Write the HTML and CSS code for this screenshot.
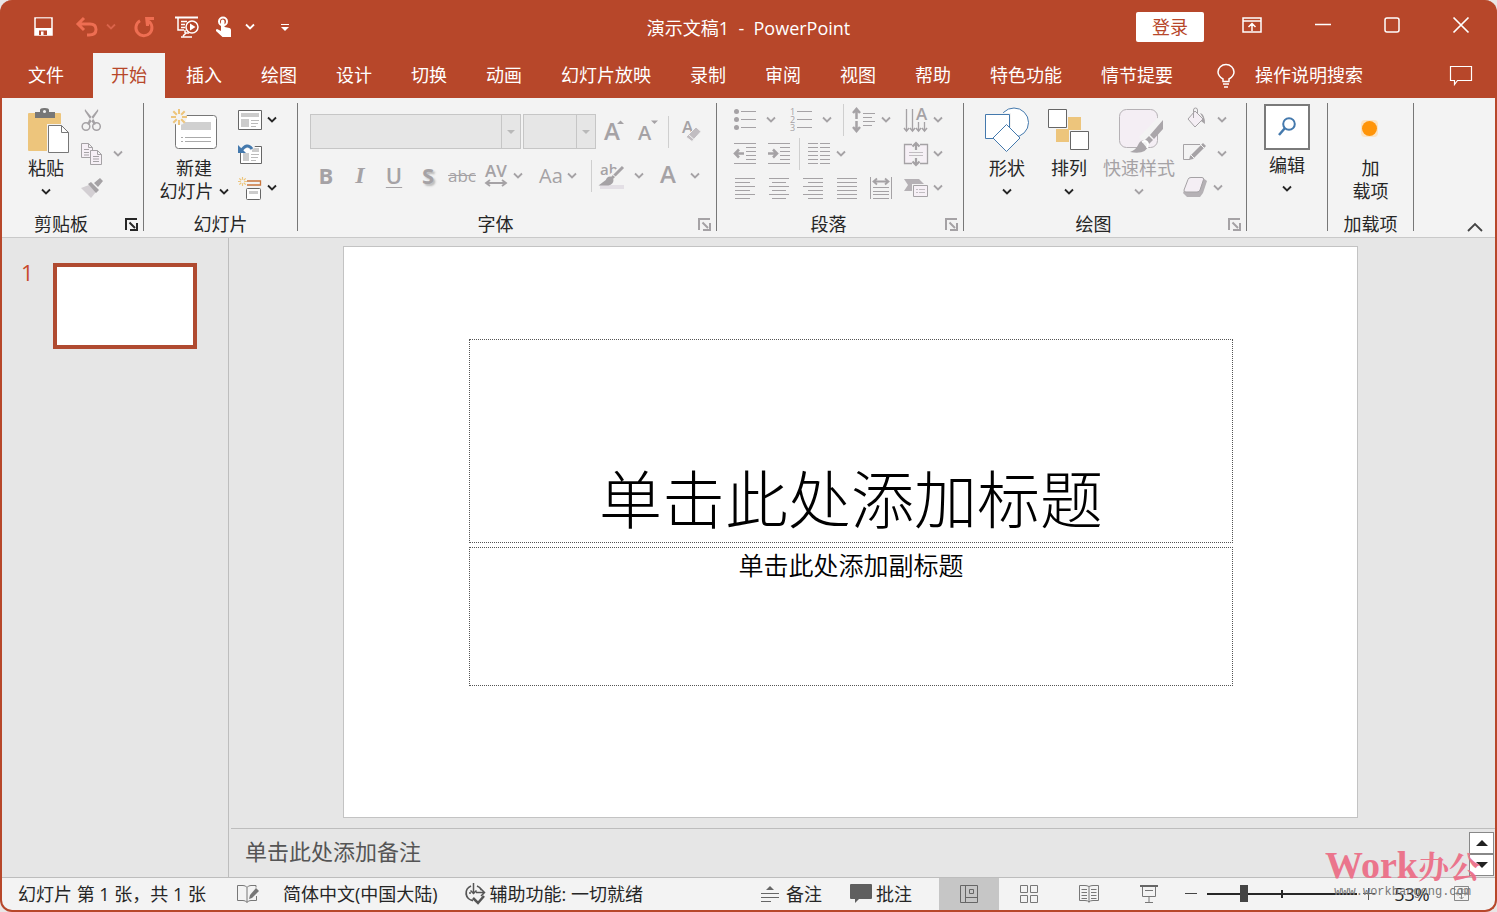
FILE: index.html
```html
<!DOCTYPE html>
<html lang="zh-CN">
<head>
<meta charset="utf-8">
<title>演示文稿1 - PowerPoint</title>
<link rel="stylesheet" href="styles.css">
</head>
<body>
<svg class="defs" aria-hidden="true">
  <symbol id="chev" viewBox="0 0 10 8"><path d="M1 1.500l4 4 4-4" fill="none" stroke="currentColor" stroke-width="1.800"/></symbol>
  <symbol id="launch" viewBox="0 0 13 13"><path d="M1 12V1h11" fill="none" stroke="currentColor" stroke-width="2"/><path d="M4.500 4.500L10 10M12 5v7H5" fill="none" stroke="currentColor" stroke-width="2"/></symbol>
  <symbol id="burst" viewBox="0 0 16 16"><path d="M8 0v5M8 11v5M0 8h5M11 8h5M2.300 2.300l3.500 3.500M10.200 10.200l3.500 3.500M13.700 2.300l-3.500 3.500M5.800 10.200l-3.500 3.500" stroke="#edc57c" stroke-width="2" fill="none"/></symbol>
</svg>
<div class="window">
  <header class="titlebar">
    <div class="quick">
      <button class="q-save" aria-label="保存"><svg width="20" height="20" viewBox="0 0 20 20"><path d="M1 1h17v17H1z" fill="none" stroke="#fff" stroke-width="1.500"/><path d="M1 11h17v7H1z" fill="#fff"/><path d="M2 1.500v8q0 1.500 1.500 1.500h12q1.500 0 1.500-1.500v-8z" fill="#b7472a"/><path d="M5 13.500h8V18H5z" fill="#b7472a"/><path d="M7 14.500h2.500V18H7z" fill="#fff"/></svg></button>
      <button class="q-undo" aria-label="撤消"><svg width="22" height="20" viewBox="0 0 22 20"><path d="M8 1L2 7l6 6M2.500 7H14q6 0 6 5.500T13 18h-2" fill="none" stroke="#ee6e52" stroke-width="3"/></svg></button>
      <button class="q-more" aria-label="撤消选项"><svg class="chev faded"><use href="#chev"/></svg></button>
      <button class="q-redo" aria-label="恢复"><svg width="20" height="20" viewBox="0 0 20 20"><path d="M14.500 4.200A8 8 0 1 1 6 3.800" fill="none" stroke="#ee6e52" stroke-width="3"/><path d="M11 0h9v3h-5v6h-3z" fill="#ee6e52"/></svg></button>
      <button class="q-show" aria-label="从头开始"><svg width="24" height="22" viewBox="0 0 24 22"><path d="M0 1.500h23" stroke="#fff" stroke-width="2"/><path d="M3 2v12h6M6 5.500h6M6 8.500h4M6 11.500h4M10 14v3M6 21h11M8 20l3-3h3" stroke="#fff" stroke-width="1.500" fill="none"/><circle cx="17" cy="11" r="6" fill="#b7472a" stroke="#fff" stroke-width="1.500"/><path d="M15 7.500v7l5.500-3.500z" fill="#fff"/></svg></button>
      <button class="q-touch" aria-label="触摸/鼠标模式"><svg width="17" height="22" viewBox="0 0 17 22"><circle cx="8" cy="5.500" r="4" fill="none" stroke="#fff" stroke-width="2"/><path d="M6 5q0-1.500 1.700-1.500T9.500 5v6l5 1q1.500.5 1.500 2v7H7.500L1 15q-.5-1.500 1-2l4 2z" fill="#fff"/></svg></button>
      <button class="q-more2" aria-label="模式选项"><svg class="chev"><use href="#chev"/></svg></button>
      <button class="q-custom" aria-label="自定义快速访问工具栏"><svg width="8" height="8" viewBox="0 0 8 8"><path d="M0 1.500h8" stroke="#fff"/><path d="M0 4h8L4 8z" fill="#fff"/></svg></button>
    </div>
    <h1 class="doc-title">演示文稿1&nbsp; -&nbsp; PowerPoint</h1>
    <div class="controls">
      <button class="login">登录</button>
      <button class="ribbon-mode" aria-label="功能区显示选项"><svg width="20" height="16" viewBox="0 0 20 16"><path d="M1 1h18v14H1zM1 4h18M10 14V7M6.500 10L10 6.500l3.500 3.500" fill="none" stroke="#fff" stroke-width="1.500"/></svg></button>
      <button class="win" aria-label="最小化"><svg width="16" height="16" viewBox="0 0 16 16"><path d="M0 7.500h16" stroke="#fff" stroke-width="1.500"/></svg></button>
      <button class="win" aria-label="最大化"><svg width="16" height="16" viewBox="0 0 16 16"><rect x="1" y="1" width="14" height="14" rx="2" fill="none" stroke="#fff" stroke-width="1.500"/></svg></button>
      <button class="win" aria-label="关闭"><svg width="16" height="16" viewBox="0 0 16 16"><path d="M.5.500l15 15M15.500.500l-15 15" stroke="#fff" stroke-width="1.700"/></svg></button>
    </div>
  </header>

  <nav class="tabs">
    <button class="tab file">文件</button>
    <button class="tab active">开始</button>
    <button class="tab">插入</button>
    <button class="tab">绘图</button>
    <button class="tab">设计</button>
    <button class="tab">切换</button>
    <button class="tab">动画</button>
    <button class="tab">幻灯片放映</button>
    <button class="tab">录制</button>
    <button class="tab">审阅</button>
    <button class="tab">视图</button>
    <button class="tab">帮助</button>
    <button class="tab">特色功能</button>
    <button class="tab">情节提要</button>
    <button class="tell"><svg width="18" height="24" viewBox="0 0 18 24"><path d="M6 17.500v-2.500Q1 12 1 8a8 7.500 0 0 1 16 0q0 4-5 7v2.500zM6 20h6M7 23h4" fill="none" stroke="#fff" stroke-width="1.500"/></svg>操作说明搜索</button>
    <button class="comment" aria-label="批注"><svg width="22" height="20" viewBox="0 0 22 20"><path d="M.5.500h21v14H7.500L4.500 18.500v-4h-4z" fill="none" stroke="#fff" stroke-width="1.200"/></svg></button>
  </nav>

  <section class="ribbon">
    <div class="group g-clip">
      <div class="body">
        <button class="big paste"><span class="pic"><svg width="42" height="46" viewBox="0 0 42 46"><rect x="0" y="5" width="33" height="38" rx="1" fill="#edc57c"/><path d="M7 4h5V2q0-2 4-2h1q4 0 4 2v2h6v6H7z" fill="#777"/><circle cx="16.500" cy="3.500" r="1.500" fill="#f3f3f3"/><path d="M20.500 17.500h14l6 6v21h-20z" fill="#fff" stroke="#f3f3f3" stroke-width="3"/><path d="M20.500 17.500h13l7 7v20h-20zM33.500 17.500v7h7" fill="#fff" stroke="#777"/></svg></span><span>粘贴</span><span class="line"><svg class="chev"><use href="#chev"/></svg></span></button>
        <div class="stack off">
          <div class="row"><button class="tool" disabled aria-label="剪切"><svg width="22" height="24" viewBox="0 0 22 24"><circle cx="5" cy="18.500" r="3.800" fill="none" stroke="currentColor" stroke-width="1.500"/><circle cx="15.500" cy="18.500" r="3.800" fill="none" stroke="currentColor" stroke-width="1.500"/><path d="M4 1q-1 2 1 4l6 9 2 3 2-1-2-4zM17 1q1 2-1 4l-6 9-2 3-2-1 2-4z" fill="currentColor"/></svg></button></div>
          <div class="row"><button class="tool" disabled aria-label="复制"><svg width="22" height="22" viewBox="0 0 22 22"><path d="M.5.500h7l4 4v10H.500zM7.500.500v4h4M3 6.500h5M3 9.500h5M3 12h5" fill="#f6f0f6" stroke="currentColor"/><path d="M9.500 7.500h7l4 4v10h-11zM16.500 7.500v4h4M12 13.500h6M12 16h6M12 18.500h6" fill="#f6f0f6" stroke="currentColor"/></svg><svg class="chev"><use href="#chev"/></svg></button></div>
          <div class="row"><button class="tool" disabled aria-label="格式刷"><svg width="22" height="20" viewBox="0 0 22 20"><path d="M0 10l8-3 7 7-5 6z" fill="#d3cfd3"/><path d="M7 6l3-2 8 8-3 3zM13 5l6-5 3 3-5 6z" fill="currentColor"/></svg></button></div>
        </div>
      </div>
      <div class="foot"><span>剪贴板</span><button class="launcher" aria-label="剪贴板设置"><svg><use href="#launch"/></svg></button></div>
    </div>

    <div class="group g-slides">
      <div class="body">
        <button class="big new"><span class="pic"><svg width="46" height="42" viewBox="0 0 46 42"><rect x="4.500" y="6.500" width="41" height="33" rx="3" fill="#fff" stroke="#777"/><path d="M10 13h30v8H10z" fill="#d0d0d0"/><path d="M10 28.500h2M14 28.500h26M10 32.500h2M14 32.500h26" stroke="#aaa"/><circle cx="8" cy="8" r="8" fill="#f3f3f3"/><use href="#burst" width="16" height="16"/></svg></span><span>新建</span><span class="line">幻灯片<svg class="chev"><use href="#chev"/></svg></span></button>
        <div class="stack">
          <div class="row"><button class="tool" aria-label="版式"><svg width="24" height="20" viewBox="0 0 24 20"><path d="M.5.500h23v19H.500z" fill="#fff" stroke="#666"/><path d="M3 3h18v4H3zM3 9h8v8H3z" fill="#ccc"/><path d="M13 10.500h8M13 13.500h7M13 16.500h5" stroke="#bbb"/></svg><svg class="chev"><use href="#chev"/></svg></button></div>
          <div class="row"><button class="tool" aria-label="重置"><svg width="24" height="20" viewBox="0 0 24 20"><path d="M2.500 2.500h21v17h-21z" fill="#fff" stroke="#666"/><path d="M14 4h7v4h-7zM5 9h6v8H5z" fill="#ccc"/><path d="M13 10.500h8M13 13.500h7M13 16.500h5" stroke="#bbb"/><path d="M2 6Q9-3 15 5" fill="none" stroke="#f3f3f3" stroke-width="6"/><path d="M3 7Q9-2 14 5" fill="none" stroke="#4479ad" stroke-width="3"/><path d="M0 1v8h8z" fill="#4479ad"/></svg></button></div>
          <div class="row"><button class="tool" aria-label="节"><svg width="24" height="24" viewBox="0 0 24 24"><path d="M9 5h13.500v4H9" fill="none" stroke="#c9763c" stroke-width="1.300"/><use href="#burst" x="0" y="1" width="9" height="9"/><rect x="8.500" y="12.500" width="14" height="11" rx="1" fill="#fff" stroke="#666"/><path d="M11 15h9v3h-9z" fill="#ccc"/></svg><svg class="chev"><use href="#chev"/></svg></button></div>
        </div>
      </div>
      <div class="foot"><span>幻灯片</span></div>
    </div>

    <div class="group g-font off">
      <div class="body lines">
        <div class="row">
          <span class="combo name"><select disabled aria-label="字体"><option></option></select></span>
          <span class="combo size"><select disabled aria-label="字号"><option></option></select></span>
          <button class="sq" disabled aria-label="增大字号"><svg width="22" height="26" viewBox="0 0 22 26"><text x="1" y="21" font-size="24" font-weight="600">A</text><path d="M14 5l3.500-3.500L21 5z" fill="currentColor"/></svg></button>
          <button class="sq" disabled aria-label="减小字号"><svg width="22" height="26" viewBox="0 0 22 26"><text x="1" y="21" font-size="20" font-weight="600">A</text><path d="M14 1.500L17.500 5 21 1.500z" fill="currentColor"/></svg></button>
          <i class="sep"></i>
          <button class="sq clear" disabled aria-label="清除格式"><svg width="22" height="26" viewBox="0 0 22 26"><text x="1" y="14" font-size="17" font-weight="600">A</text><path d="M15 8l5 4.500-9 10-6-4.500z" stroke="#f3f3f3" fill="#c1bdc1"/><path d="M7.500 15.500l5.500 5" stroke="#f3f3f3"/></svg></button>
        </div>
        <div class="row second">
          <button class="sq" disabled><b>B</b></button>
          <button class="sq" disabled><em>I</em></button>
          <button class="sq" disabled><u>U</u></button>
          <button class="sq" disabled><b class="shade">S</b></button>
          <button class="sq abc" disabled><s>abc</s></button>
          <button class="tool" disabled aria-label="字符间距"><svg width="22" height="24" viewBox="0 0 22 24"><text x="0" y="13" font-size="17" font-weight="600">AV</text><path d="M1 19h20M5 16l-4 3 4 3M17 16l4 3-4 3" fill="none" stroke="currentColor" stroke-width="1.800"/></svg><svg class="chev"><use href="#chev"/></svg></button>
          <button class="tool case" disabled>Aa<svg class="chev"><use href="#chev"/></svg></button>
          <i class="sep"></i>
          <button class="tool wide" disabled aria-label="突出显示颜色"><svg width="24" height="26" viewBox="0 0 24 26"><text x="0" y="12" font-size="15" font-weight="600">ab</text><path d="M0 22h24v4H0z" fill="#e3dfe5"/><path d="M22 5l-11 9" stroke="#f3f3f3" stroke-width="6"/><path d="M23 4l-12 12M10 15q-2 0-3 3l-4 3h5q4-1 4-4z" stroke="currentColor" stroke-width="3" fill="currentColor"/><path d="M12 11l6 5" stroke="#f3f3f3"/></svg><svg class="chev"><use href="#chev"/></svg></button>
          <button class="tool wide" disabled aria-label="字体颜色"><svg width="22" height="26" viewBox="0 0 22 26"><text x="2" y="20" font-size="24" font-weight="600">A</text></svg><svg class="chev"><use href="#chev"/></svg></button>
        </div>
      </div>
      <div class="foot"><span>字体</span><button class="launcher" disabled aria-label="字体设置"><svg><use href="#launch"/></svg></button></div>
    </div>

    <div class="group g-para off">
      <div class="body">
        <div class="stack">
          <div class="row">
            <button class="tool wide" disabled aria-label="项目符号"><svg width="22" height="24" viewBox="0 0 22 24"><path d="M7 3.500h15M7 11.500h15M7 19.500h15" stroke="currentColor"/><g fill="currentColor"><circle cx="2.500" cy="3.500" r="2.500"/><circle cx="2.500" cy="11.500" r="2.500"/><circle cx="2.500" cy="19.500" r="2.500"/></g></svg><svg class="chev"><use href="#chev"/></svg></button>
            <button class="tool wide" disabled aria-label="编号"><svg width="22" height="24" viewBox="0 0 22 24"><path d="M7 3.500h15M7 11.500h15M7 19.500h15" stroke="currentColor"/><text x="0" y="7" font-size="9">1</text><text x="0" y="15" font-size="9">2</text><text x="0" y="23" font-size="9">3</text></svg><svg class="chev"><use href="#chev"/></svg></button>
            <i class="sep"></i>
            <button class="tool near" disabled aria-label="行距"><svg width="24" height="24" viewBox="0 0 24 24"><path d="M4.500 1v10M1 5l3.500-4L8 5M4.500 13v10M1 19l3.500 4L8 19" fill="none" stroke="currentColor" stroke-width="2.500"/><path d="M11 5.500h12M11 9.500h9M11 13.500h12M11 17.500h9" stroke="currentColor"/></svg><svg class="chev"><use href="#chev"/></svg></button>
            <button class="tool near last" disabled aria-label="文字方向"><svg width="24" height="26" viewBox="0 0 24 26"><path d="M2.500 2v22M8.500 2v22M14.500 15v9M20.500 15v9" stroke="currentColor" stroke-width="1.300"/><path d="M0 21l2.500 3L5 21M6 21l2.500 3 2.500-3M12 21l2.500 3 2.500-3M18 21l2.500 3 2.500-3" fill="none" stroke="currentColor" stroke-width="1.500"/><text x="12" y="13" font-size="17" font-weight="600">A</text></svg><svg class="chev"><use href="#chev"/></svg></button>
          </div>
          <div class="row">
            <button class="sq" disabled aria-label="减少缩进"><svg width="22" height="22" viewBox="0 0 22 22"><path d="M0 .500h22M12 4.500h10M12 8.500h10M12 12.500h10M12 16.500h10M0 20.500h22" stroke="currentColor"/><path d="M10 10.500H2M5 6.500l-4 4 4 4" stroke="currentColor" fill="none" stroke-width="2.500"/></svg></button>
            <button class="sq" disabled aria-label="增加缩进"><svg width="22" height="22" viewBox="0 0 22 22"><path d="M0 .500h22M12 4.500h10M12 8.500h10M12 12.500h10M12 16.500h10M0 20.500h22" stroke="currentColor"/><path d="M0 10.500h8M5 6.500l4 4-4 4" stroke="currentColor" fill="none" stroke-width="2.500"/></svg></button>
            <i class="sep"></i>
            <button class="tool" disabled aria-label="分栏"><svg width="22" height="22" viewBox="0 0 22 22"><path d="M0 .500h10M0 4.500h10M0 8.500h10M0 12.500h10M0 16.500h10M0 20.500h10M12 .500h10M12 4.500h10M12 8.500h10M12 12.500h10M12 16.500h10M12 20.500h10" stroke="currentColor"/></svg><svg class="chev"><use href="#chev"/></svg></button>
            <button class="tool near last" disabled aria-label="对齐文本"><svg width="24" height="24" viewBox="0 0 24 24"><path d="M8 2.500H.500v19H8M16 2.500h7.500v19H16" fill="#f6f0f6" stroke="currentColor" stroke-width="1.300"/><path d="M5 10.500h14M5 13.500h14" stroke="#c1bdc1"/><path d="M12 1v7M8.500 4.500L12 1l3.500 3.500M12 16v7M8.500 19.500L12 23l3.500-3.500" fill="none" stroke="currentColor" stroke-width="2.200"/></svg><svg class="chev"><use href="#chev"/></svg></button>
          </div>
          <div class="row">
            <button class="sq" disabled aria-label="左对齐"><svg width="20" height="22" viewBox="0 0 20 22"><path d="M0 1.500h20M0 5.500h15M0 9.500h20M0 13.500h15M0 17.500h20M0 21.500h15" stroke="currentColor"/></svg></button>
            <button class="sq" disabled aria-label="居中"><svg width="20" height="22" viewBox="0 0 20 22"><path d="M0 1.500h20M3 5.500h14M0 9.500h20M3 13.500h14M0 17.500h20M3 21.500h14" stroke="currentColor"/></svg></button>
            <button class="sq" disabled aria-label="右对齐"><svg width="20" height="22" viewBox="0 0 20 22"><path d="M0 1.500h20M5 5.500h15M0 9.500h20M5 13.500h15M0 17.500h20M5 21.500h15" stroke="currentColor"/></svg></button>
            <button class="sq" disabled aria-label="两端对齐"><svg width="20" height="22" viewBox="0 0 20 22"><path d="M0 1.500h20M0 5.500h20M0 9.500h20M0 13.500h20M0 17.500h20M0 21.500h20" stroke="currentColor"/></svg></button>
            <button class="sq" disabled aria-label="分散对齐"><svg width="22" height="22" viewBox="0 0 22 22"><path d="M.5 0v22M21.500 0v22M3 10.500h16M3 14.500h16M3 17.500h16M3 21.500h16" stroke="currentColor"/><path d="M4 4.500h14M7 1.500l-3.500 3L7 7.500M15 1.500l3.500 3-3.500 3" fill="none" stroke="currentColor" stroke-width="1.800"/></svg></button>
            <button class="tool near last" disabled aria-label="转换为 SmartArt"><svg width="24" height="20" viewBox="0 0 24 20"><path d="M0 1h15l5 5-3 7H0l4-6z" fill="#b5b1b5"/><path d="M9.500 7.500h14v11h-14z" fill="#f6f0f6" stroke="#f3f3f3" stroke-width="3"/><path d="M9.500 7.500h14v11h-14z" fill="#f6f0f6" stroke="currentColor"/><path d="M12 11.500h2M15 11.500h6M12 14.500h2M15 14.500h6" stroke="#c1bdc1"/></svg><svg class="chev"><use href="#chev"/></svg></button>
          </div>
        </div>
      </div>
      <div class="foot"><span>段落</span><button class="launcher" disabled aria-label="段落设置"><svg><use href="#launch"/></svg></button></div>
    </div>

    <div class="group g-draw">
      <div class="body">
        <button class="big"><span class="pic"><svg width="44" height="46" viewBox="0 0 44 46"><circle cx="29" cy="15.500" r="14.500" fill="#fff" stroke="#4479ad"/><path d="M.5 7.500h24v24H.500z" fill="#fff" stroke="#f3f3f3" stroke-width="3"/><path d="M.5 7.500h24v24H.500z" fill="#fff" stroke="#4479ad"/><path d="M21.500 17.500l13.500 13.500-13.500 13.500L8 31z" fill="#fff" stroke="#4479ad"/></svg></span><span>形状</span><span class="line"><svg class="chev"><use href="#chev"/></svg></span></button>
        <button class="big"><span class="pic"><svg width="42" height="42" viewBox="0 0 42 42"><path d="M20 8h13v13H20zM8 20h13v13H8z" fill="#edc57c"/><path d="M.5.500h18v18H.500zM22.500 22.500h18v18h-18z" fill="#fff" stroke="#f3f3f3" stroke-width="3"/><path d="M.5.500h18v18H.500zM22.500 22.500h18v18h-18z" fill="#fff" stroke="#666"/></svg></span><span>排列</span><span class="line"><svg class="chev"><use href="#chev"/></svg></span></button>
        <button class="big quickstyle off" disabled><span class="pic"><svg width="46" height="46" viewBox="0 0 46 46"><rect x="3.500" y="2.500" width="38" height="38" rx="7" fill="#f4eef4" stroke="#b5b1b5"/><path d="M47 13L27 34" stroke="#f3f3f3" stroke-width="11"/><path d="M47 13v9L38 32l-4-4zM33 29l4 4-4 4-4-4z" fill="#aaa6aa"/><path d="M29 33q-5 0-7 5t-8 7q16 3 19-7z" fill="#aaa6aa"/><path d="M26 35q3-2 5 0t0 6" stroke="#fff" stroke-width="2" fill="#f3f3f3"/></svg></span><span>快速样式</span><span class="line"><svg class="chev"><use href="#chev"/></svg></span></button>
        <div class="stack off tight">
          <div class="row"><button class="tool wide" disabled aria-label="形状填充"><svg width="24" height="26" viewBox="0 0 24 26"><path d="M12 4l8 8-8 8-7-8z" fill="#f4eef4" stroke="currentColor"/><path d="M10.500 11V3q0-2 2-2t2 2v3" fill="none" stroke="currentColor"/><path d="M17 6q5 1 5 11l-4-3 2-3z" fill="currentColor"/></svg><svg class="chev"><use href="#chev"/></svg></button></div>
          <div class="row"><button class="tool wide" disabled aria-label="形状轮廓"><svg width="24" height="24" viewBox="0 0 24 24"><path d="M17 2.500H.500v15H7" fill="none" stroke="currentColor"/><path d="M20 1l3 3-13 13-4 1 1-4z" fill="currentColor"/><path d="M18 3l3 3M8 13l3 3" stroke="#f3f3f3"/></svg><svg class="chev"><use href="#chev"/></svg></button></div>
          <div class="row"><button class="tool" disabled aria-label="形状效果"><svg width="24" height="24" viewBox="0 0 24 24"><path d="M7 2h13l4 3-4 12-3 4H4l-4-4z" fill="#b5b1b5"/><path d="M8 1.500h11q2 0 1.500 2L17 14q-.5 2-3 2H3q-2.500 0-2-2L5 3.500q.5-2 3-2z" fill="#f4eef4" stroke="currentColor"/></svg><svg class="chev"><use href="#chev"/></svg></button></div>
        </div>
      </div>
      <div class="foot"><span>绘图</span><button class="launcher off" disabled aria-label="绘图设置"><svg><use href="#launch"/></svg></button></div>
    </div>

    <div class="group g-edit">
      <div class="body">
        <button class="big"><span class="find"><svg width="18" height="20" viewBox="0 0 18 20"><circle cx="11" cy="7" r="5.800" fill="none" stroke="#4479ad" stroke-width="2"/><path d="M7 11l-6 7" stroke="#4479ad" stroke-width="2.500"/></svg></span><span>编辑</span><span class="line"><svg class="chev"><use href="#chev"/></svg></span></button>
      </div>
    </div>

    <div class="group g-addin">
      <div class="body">
        <button class="big"><span class="pic"><svg width="20" height="22" viewBox="0 0 20 22"><rect x="0" y="1" width="17" height="17" rx="4" fill="#fbe3c3"/><circle cx="8.500" cy="9.500" r="7.500" fill="#ff9408"/></svg></span><span>加</span><span>载项</span></button>
      </div>
      <div class="foot"><span>加载项</span></div>
    </div>
    <button class="collapse" aria-label="折叠功能区"><svg width="16" height="10" viewBox="0 0 16 10"><path d="M1 9l7-7 7 7" fill="none" stroke="#444" stroke-width="1.800"/></svg></button>
  </section>

  <main class="work">
    <aside class="thumbs"><span class="num">1</span><button class="thumb" aria-label="幻灯片 1"></button></aside>
    <div class="editor">
      <div class="stage">
        <article class="slide">
          <div class="holder title">单击此处添加标题</div>
          <div class="holder subtitle">单击此处添加副标题</div>
        </article>
      </div>
      <div class="notes">
        <span>单击此处添加备注</span>
        <div class="pager">
          <button aria-label="上一张"><svg width="12" height="6" viewBox="0 0 12 6"><path d="M0 6l6-6 6 6z" fill="#222"/></svg></button>
          <button aria-label="下一张"><svg width="12" height="6" viewBox="0 0 12 6"><path d="M0 0l6 6 6-6z" fill="#222"/></svg></button>
        </div>
      </div>
    </div>
  </main>

  <footer class="status">
    <span class="count">幻灯片 第 1 张，共 1 张</span>
    <button class="spell" aria-label="拼写检查"><svg width="22" height="18" viewBox="0 0 22 18"><path d="M10 2.500Q9 .500 6 .500H.500v15H6q3 0 4 2zM10 2.500Q11 .500 14 .500h5v2M19.500 11v4.500H14q-3 0-4 2" fill="none" stroke="#777"/><path d="M19 3l3 3-7 7-3 1 1-4z" fill="#777"/></svg></button>
    <button class="lang">简体中文(中国大陆)</button>
    <button class="access"><svg width="22" height="22" viewBox="0 0 22 22"><path d="M7 3A7.500 7.500 0 0 0 9 17.500M13 3q3 1 4.500 4" fill="none" stroke="#555" stroke-width="1.800"/><path d="M9.500 0v10M6.500 7.500l3 3 3-3M5 10h2M12 9.500h8M17 6l3.500 3.500L17 13" fill="none" stroke="#555" stroke-width="1.500"/><path d="M9 15l5 5 6-7" fill="none" stroke="#555" stroke-width="2.500"/></svg>辅助功能: 一切就绪</button>
    <div class="right">
      <button class="s-notes"><svg width="18" height="16" viewBox="0 0 18 16"><path d="M5 4l4-4 4 4z" fill="#666"/><path d="M0 7.500h18M0 11.500h18M0 15.500h10" stroke="#666"/></svg>备注</button>
      <button class="s-comm"><svg width="22" height="20" viewBox="0 0 22 20"><path d="M1 0h20q1 0 1 1v13q0 1-1 1H9l-4 4v-4H1q-1 0-1-1V1q0-1 1-1z" fill="#5f5f5f"/></svg>批注</button>
      <button class="view on" aria-label="普通视图"><svg width="20" height="18" viewBox="0 0 20 18"><path d="M1.500.500h17v17h-17zM6.500.500v17M6.500 12.500h12M10.500 4.500h4v4h-4z" fill="none" stroke="#666"/></svg></button>
      <button class="view" aria-label="幻灯片浏览"><svg width="18" height="18" viewBox="0 0 18 18"><path d="M.5.500h7v7h-7zM10.500.500h7v7h-7zM.5 10.500h7v7h-7zM10.500 10.500h7v7h-7z" fill="none" stroke="#777"/></svg></button>
      <button class="view" aria-label="阅读视图"><svg width="20" height="18" viewBox="0 0 20 18"><path d="M10 1.500Q8 .500 6 .500H.500v15H6q3 0 4 1.500 1-1.500 4-1.500h5.500V.500H14q-2 0-4 1zM10 1.500v16M2.500 4.500H8M2.500 7.500H8M2.500 10.500H8M2.500 13.500H8M12 4.500h5.500M12 7.500h5.500M12 10.500h5.500M12 13.500h5.500" fill="none" stroke="#777"/></svg></button>
      <button class="view" aria-label="幻灯片放映"><svg width="18" height="18" viewBox="0 0 18 18"><path d="M0 1h18" stroke="#666" stroke-width="2"/><path d="M2.500 2v9.500h13V2M5 5.500h8M9 12v5.500M5 17.500h8" fill="none" stroke="#777"/></svg></button>
      <button class="zoom" aria-label="缩小"><svg width="12" height="12" viewBox="0 0 12 12"><path d="M0 5.500h12" stroke="#444"/></svg></button>
      <span class="range"><input type="range" min="0" max="100" value="23" aria-label="缩放"></span>
      <button class="zoom" aria-label="放大"><svg width="12" height="12" viewBox="0 0 12 12"><path d="M0 5.500h12M5.500 0v12" stroke="#555"/></svg></button>
      <button class="percent">53%</button>
      <button class="fit" aria-label="适应窗口"><svg width="16" height="16" viewBox="0 0 16 16"><path d="M.5.500h14v14H.500zM7.500 2v11M2 7.500h11M5.500 4l2-2 2 2M5.500 11l2 2 2-2M4 5.500l-2 2 2 2M11 5.500l2 2-2 2" fill="none" stroke="#888"/></svg></button>
    </div>
  </footer>
  <div class="mark"><div class="brand">Work<span>办公</span></div><div class="site">www.workbangong.com</div></div>
</div>
</body>
</html>
```
FILE: styles.css
```css
* { box-sizing: border-box; }
body {
  margin: 0;
  background: #e9e6e6;
  font: 18px/23px "Open Sans", "Noto Sans CJK SC", sans-serif;
  color: #262626;
}
.defs { position: absolute; width: 0; height: 0; }
svg { display: block; flex: none; overflow: visible; }
button {
  margin: 0; padding: 0; border: 0; background: none;
  font: inherit; color: inherit; white-space: nowrap;
  display: flex; align-items: center; justify-content: center;
}
.window {
  position: relative;
  height: 100vh;
  display: flex; flex-direction: column;
  border: 2px solid #b7472a; border-top: 0;
  border-radius: 12px;
  overflow: hidden;
  background: #b7472a;
}
.chev { width: 10px; height: 8px; }
.faded { color: #d9634a; }
.off { color: #a5a2a5; }

/* title bar */
.titlebar {
  display: grid; grid-template-columns: 1fr auto 1fr;
  height: 53px; color: #fff;
}
.quick { display: flex; align-items: center; padding-left: 32px; }
.q-undo { margin-left: 22px; }
.q-more { margin-left: 8px; }
.q-redo { margin-left: 18px; }
.q-show { margin-left: 21px; }
.q-touch { margin-left: 16px; }
.q-more2 { margin-left: 13px; }
.q-custom { margin-left: 26px; }
.doc-title { margin: 0; padding-top: 2px; align-self: center; font-size: 18px; font-weight: 400; line-height: 24px; }
.controls { display: flex; align-items: center; justify-content: flex-end; }
.login { width: 68px; height: 30px; padding-top: 2px; background: #fff; color: #b7472a; border-radius: 2px; }
.ribbon-mode { width: 72px; height: 50px; margin-left: 12px; }
.win { width: 69px; height: 50px; }
.ribbon-mode, .win { align-self: flex-start; }

/* tabs */
.tabs { display: flex; height: 45px; gap: 3px; color: #fff; }
.tab { padding: 0 18px; }
.file { padding-left: 26px; margin-right: 8px; }
.active { background: #f3f3f3; color: #b7472a; }
.tell { gap: 20px; margin-left: 23px; }
.comment { margin-left: auto; padding-right: 23px; }

/* ribbon */
.ribbon {
  display: flex; height: 140px; padding: 5px 0 6px;
  background: #f3f3f3; border-bottom: 1px solid #c9c9c9;
}
.group { flex: none; border-right: 1px solid #777; display: flex; flex-direction: column; }
.body { display: flex; flex: 1; align-items: flex-start; }
.foot { display: flex; height: 14px; line-height: 14px; color: #262626; }
.foot span { flex: 1; text-align: center; }
.launcher { width: 23px; }
.launcher svg { width: 13px; height: 13px; }
.g-font .launcher, .g-para .launcher, .g-draw .launcher { color: #a5a2a5; }
.g-clip { width: 142px; }
.g-slides { width: 154px; }
.g-font { width: 419px; }
.g-para { width: 247px; }
.g-draw { width: 283px; }
.g-edit { width: 81px; }
.g-addin { width: 86px; }

.big { flex-direction: column; justify-content: flex-start; width: 62px; }
.pic { height: 54px; display: flex; align-items: center; justify-content: center; }
.line { display: flex; align-items: center; gap: 5px; height: 23px; }
.paste { width: 52px; margin-left: 18px; }
.paste .pic { padding: 2px 0 0 6px; }
.new { width: 70px; margin-left: 15px; }
.quickstyle { width: 78px; }
.g-draw .body { padding-left: 12px; }
.g-edit .big, .g-addin .big { width: 100%; }
.find {
  width: 46px; height: 46px; margin: 1px 0 4px;
  display: flex; align-items: center; justify-content: center;
  background: #fff; border: 2px solid #7a7a7a;
}

.stack { flex: 1; }
.stack .row { height: 34px; }
.row { display: flex; align-items: center; }
.tool { gap: 6px; padding: 0 6px; }
.g-clip .tool { padding-left: 9px; gap: 10px; }
.g-slides .tool { padding-left: 9px; gap: 5px; }
.wide { gap: 10px; padding-right: 8px; }
.near { gap: 5px; padding-right: 7px; }
.last { margin-left: auto; }
.sq { width: 34px; height: 34px; }
.sep { width: 1px; height: 32px; margin: 0 2px 0 3px; background: #cfcfcf; }
.tight .tool { padding-left: 5px; }
.g-para .stack { padding: 0 13px 0 11px; }

.lines { flex-direction: column; gap: 9px; padding: 11px 0 0 11px; }
.lines .row { height: 35px; }
.lines svg text, .g-para svg text { fill: currentColor; }
.combo { position: relative; height: 35px; margin: 0 1px; }
.combo select {
  appearance: none; display: block; width: 100%; height: 100%; opacity: 1;
  border: 1px solid #c6c6c6; border-radius: 0; background: #e6e6e6;
}
.combo::before {
  content: ""; position: absolute; right: 19px; top: 0; bottom: 0;
  border-left: 1px solid #c6c6c6;
}
.combo::after {
  content: ""; position: absolute; right: 6px; top: 16px;
  border: 4px solid transparent; border-top-color: #b9b9b9; border-bottom: 0;
}
.name { width: 211px; }
.size { width: 73px; }
.clear { margin-left: 4px; }
.sq b, .sq em, .sq u { font-size: 22px; font-weight: 700; }
.sq em { font-family: "Liberation Serif", serif; font-size: 24px; }
.sq u { font-weight: 600; text-underline-offset: 3px; text-decoration-thickness: 1px; }
.shade { text-shadow: 2px 2px 2px #bbb; }
.abc { font-size: 17px; }
.case { font-size: 20px; gap: 4px; padding: 0 11px 0 10px; }

.collapse { margin-left: auto; align-self: flex-end; width: 40px; height: 16px; margin-bottom: -4px; }

/* workspace */
.work { flex: 1; display: flex; min-height: 0; background: #e6e6e6; }
.thumbs {
  width: 227px; display: flex; align-items: flex-start;
  padding: 25px 31px 0 19px; gap: 19px;
  border-right: 1px solid #bdbdbd;
}
.num { color: #c84a2c; font-size: 22px; line-height: 18px; }
.thumb { flex: 1; height: 86px; border: 4px solid #b04a30; background: #fff; }
.editor { flex: 1; display: flex; flex-direction: column; padding-left: 2px; }
.stage { flex: 1; display: flex; padding: 8px 137px 10px 112px; }
.slide {
  flex: 1; display: flex; flex-direction: column; gap: 4px;
  padding: 92px 124px 131px 125px;
  background: #fff; border: 1px solid #c3c3c3;
  font-family: "Noto Sans CJK SC", sans-serif; color: #000;
}
.holder { border: 1px dotted #555; text-align: center; }
.title {
  flex: 201 1 0; display: flex; align-items: flex-end; justify-content: center;
  padding-bottom: 8px; font-size: 63px; line-height: 76px; font-weight: 300;
}
.subtitle { flex: 142 1 0; font-size: 25px; line-height: 32px; font-weight: 350; }
.notes {
  display: flex; align-items: center; justify-content: space-between;
  height: 49px; padding: 0 1px 0 14px;
  border-top: 1px solid #bdbdbd;
  font-size: 22px; line-height: 28px; color: #555;
}
.notes span { padding-bottom: 5px; }
.pager { display: flex; flex-direction: column; padding-top: 2px; }
.pager button { width: 25px; height: 22px; background: #fff; border: 1px solid #888; }

/* status bar */
.status {
  display: flex; align-items: center; height: 33px;
  background: #f3f3f3; border-top: 1px solid #bdbdbd; padding-left: 16px;
}
.spell { margin-left: 31px; }
.lang { margin-left: 24px; }
.access { margin-left: 26px; gap: 4px; }
.right { margin-left: auto; display: flex; align-items: center; align-self: stretch; }
.s-notes { gap: 7px; margin-right: 28px; }
.s-comm { gap: 4px; margin-right: 27px; }
.view { width: 60px; align-self: stretch; }
.on { background: #c6c6c6; }
.zoom { width: 23px; }
.range { position: relative; width: 150px; margin-left: 5px; display: flex; }
.range::after { content: ""; position: absolute; left: 49%; top: 6px; width: 2px; height: 8px; background: #262626; }
.range input { appearance: none; width: 100%; height: 20px; margin: 0; background: none; }
.range input::-webkit-slider-runnable-track { height: 2px; background: #262626; }
.range input::-webkit-slider-thumb { appearance: none; width: 8px; height: 17px; margin-top: -8px; background: #444; }
.percent { width: 38px; margin-left: 13px; }
.fit { margin-left: 23px; margin-right: 25px; }

/* watermark */
.mark { position: absolute; right: 15px; bottom: 12px; text-align: center; pointer-events: none; }
.brand { font: bold 38px/36px "Liberation Serif", "Noto Serif CJK SC", "Noto Sans CJK SC", serif; color: #ec6f88; opacity: .95; }
.brand span { font-size: 31px; }
.site { font: 12px/12px "Liberation Mono", monospace; color: #777; }
```
